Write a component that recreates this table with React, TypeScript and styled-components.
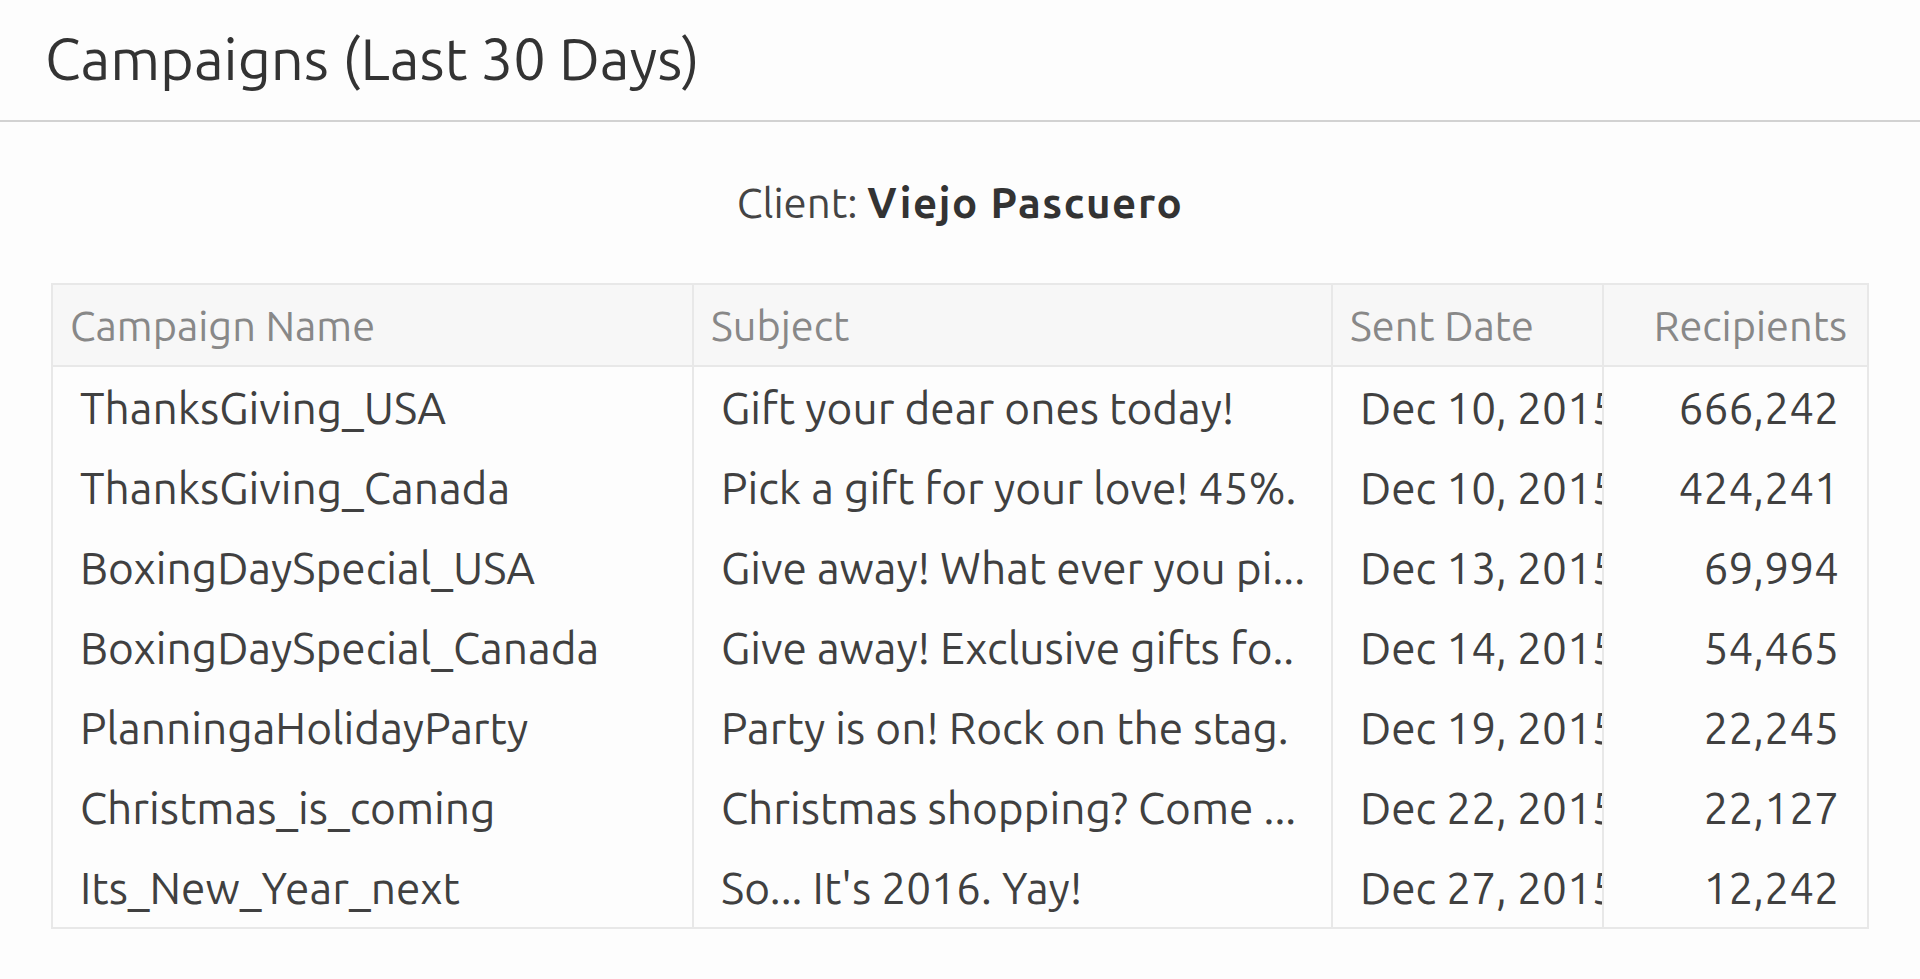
import React from "react";
import styled, { createGlobalStyle } from "styled-components";

const GlobalStyle = createGlobalStyle`
  html, body {
    margin: 0;
    padding: 0;
    background: #fdfdfd;
  }
  body {
    font-family: "Ubuntu", "Noto Sans", "Liberation Sans", sans-serif;
    color: #444;
  }
  * { box-sizing: border-box; }
`;

const Page = styled.div`
  width: 1920px;
  min-height: 979px;
  background: #fdfdfd;
`;

const Header = styled.header`
  height: 122px;
  display: flex;
  align-items: center;
  padding: 0 0 2px 45px;
  border-bottom: 2px solid #d2d2d2;
`;

const Title = styled.h1`
  margin: 0;
  font-size: 57.8px;
  font-weight: 400;
  line-height: 64px;
  color: #333;
`;

const Content = styled.main`
  padding: 56px 51px 0;
`;

const ClientLine = styled.div`
  font-size: 42px;
  line-height: 50px;
  text-align: center;
  color: #444;
  margin-bottom: 55px;
`;

const ClientName = styled.strong`
  font-weight: 700;
  letter-spacing: 1.6px;
  color: #333;
`;

const Table = styled.div`
  display: grid;
  grid-template-columns: 641px 639px 271px 263px;
  border: 2px solid #e8e8e8;
  background: #fdfdfd;
`;

const HeadCell = styled.div<{ $right?: boolean; $last?: boolean }>`
  height: 82px;
  display: flex;
  align-items: center;
  justify-content: ${(p) => (p.$right ? "flex-end" : "flex-start")};
  padding: ${(p) => (p.$right ? "0 20px 0 0" : "0 0 0 17px")};
  background: #f7f7f7;
  border-bottom: 2px solid #e8e8e8;
  border-right: ${(p) => (p.$last ? "none" : "2px solid #e8e8e8")};
  font-size: 41.5px;
  color: #888;
  white-space: nowrap;
`;

const Cell = styled.div<{ $right?: boolean; $last?: boolean }>`
  height: 80px;
  display: flex;
  align-items: center;
  justify-content: ${(p) => (p.$right ? "flex-end" : "flex-start")};
  padding: ${(p) => (p.$right ? "0 28px 0 0" : "0 0 0 27px")};
  border-right: ${(p) => (p.$last ? "none" : "2px solid #e8e8e8")};
  font-size: 44.2px;
  color: #404040;
  white-space: nowrap;
  overflow: hidden;
`;

const CellText = styled.span`
  flex: none;
  white-space: nowrap;
`;

const SubjectText = styled.span`
  max-width: 610px;
  white-space: nowrap;
  overflow: hidden;
  text-overflow: ellipsis;
`;

type Row = { name: string; subject: string; date: string; recipients: string };

const rows: Row[] = [
  { name: "ThanksGiving_USA", subject: "Gift your dear ones today!", date: "Dec 10, 2015", recipients: "666,242" },
  { name: "ThanksGiving_Canada", subject: "Pick a gift for your love! 45%.", date: "Dec 10, 2015", recipients: "424,241" },
  { name: "BoxingDaySpecial_USA", subject: "Give away! What ever you pi...", date: "Dec 13, 2015", recipients: "69,994" },
  { name: "BoxingDaySpecial_Canada", subject: "Give away! Exclusive gifts fo..", date: "Dec 14, 2015", recipients: "54,465" },
  { name: "PlanningaHolidayParty", subject: "Party is on! Rock on the stag.", date: "Dec 19, 2015", recipients: "22,245" },
  { name: "Christmas_is_coming", subject: "Christmas shopping? Come ...", date: "Dec 22, 2015", recipients: "22,127" },
  { name: "Its_New_Year_next", subject: "So... It's 2016. Yay!", date: "Dec 27, 2015", recipients: "12,242" },
];

export default function App() {
  return (
    <>
      <GlobalStyle />
      <Page>
        <Header>
          <Title>Campaigns (Last 30 Days)</Title>
        </Header>
        <Content>
          <ClientLine>
            Client: <ClientName>Viejo Pascuero</ClientName>
          </ClientLine>
          <Table role="table">
            <HeadCell role="columnheader">Campaign Name</HeadCell>
            <HeadCell role="columnheader">Subject</HeadCell>
            <HeadCell role="columnheader">Sent Date</HeadCell>
            <HeadCell role="columnheader" $right $last>
              Recipients
            </HeadCell>
            {rows.map((r) => (
              <React.Fragment key={r.name}>
                <Cell role="cell">
                  <CellText>{r.name}</CellText>
                </Cell>
                <Cell role="cell">
                  <SubjectText>{r.subject}</SubjectText>
                </Cell>
                <Cell role="cell">
                  <CellText>{r.date}</CellText>
                </Cell>
                <Cell role="cell" $right $last>
                  <CellText>{r.recipients}</CellText>
                </Cell>
              </React.Fragment>
            ))}
          </Table>
        </Content>
      </Page>
    </>
  );
}
